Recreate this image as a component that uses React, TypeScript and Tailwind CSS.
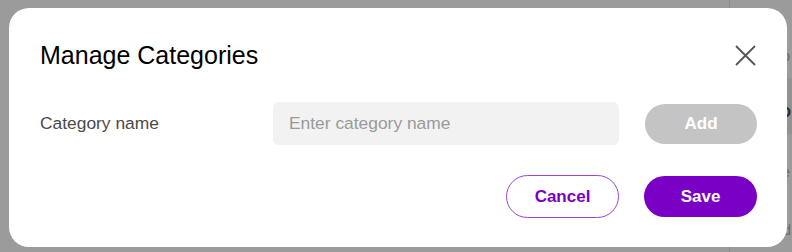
import React from "react";

export default function App() {
  return (
    <div
      className="relative w-[792px] h-[252px] overflow-hidden bg-[#9b9b9b]"
      style={{ fontFamily: '"Liberation Sans", Arial, sans-serif' }}
    >
      {/* background page (dimmed) */}
      <div className="absolute left-[729px] top-0 h-full w-[63px] border-l border-[#8c8c8c]">
        <div className="flex flex-col text-[15px] text-[#6e6e6e]">
          <div className="h-[38px]" />
          <div className="h-[40px] pr-[2px] text-right leading-[36px] whitespace-nowrap">Tab</div>
          <div className="h-[56px] pr-[1px] text-right leading-[68px] whitespace-nowrap bg-[#929292] font-bold text-[#2e2e2e]">D</div>
          <div className="h-[56px] pr-[2px] text-right leading-[76px] whitespace-nowrap">Lite</div>
          <div className="h-[56px] pr-[1px] text-right leading-[80px] whitespace-nowrap">Hold</div>
        </div>
      </div>

      {/* modal */}
      <div className="absolute left-[9px] top-[8px] w-[778px] h-[239px] rounded-[20px] bg-white pl-[31px] pr-[30px] pt-[32px]">
        <div className="flex h-[30px] items-center justify-between">
          <h2 className="text-[25px] leading-none text-black">Manage Categories</h2>
          <button className="mr-[1px] flex h-[22px] w-[22px] items-center justify-center">
            <svg width="21" height="21" viewBox="0 0 21 21" fill="none">
              <path d="M1 1L20 20M20 1L1 20" stroke="#555555" strokeWidth="1.8" />
            </svg>
          </button>
        </div>

        <div className="mt-[32px] flex h-[43px] items-center">
          <label className="w-[233px] text-[17.4px] text-[#4a4a4a]">Category name</label>
          <input
            placeholder="Enter category name"
            className="h-[43px] w-[346px] rounded-[6px] bg-[#f2f2f2] px-[16px] text-[17.4px] text-[#333] outline-none placeholder:text-[#9a9a9a]"
          />
          <button className="ml-[26px] h-[40px] w-[112px] rounded-full bg-[#c4c4c4] text-[17px] font-bold text-white">
            Add
          </button>
        </div>

        <div className="mt-[30px] flex items-center justify-end gap-[25px]">
          <button className="h-[43px] w-[113px] rounded-full border border-[#9a45d3] bg-white text-[17px] font-bold text-[#7a00c6]">
            Cancel
          </button>
          <button className="h-[41px] w-[113px] rounded-full bg-[#7a00c6] text-[17px] font-bold text-white">
            Save
          </button>
        </div>
      </div>
    </div>
  );
}
